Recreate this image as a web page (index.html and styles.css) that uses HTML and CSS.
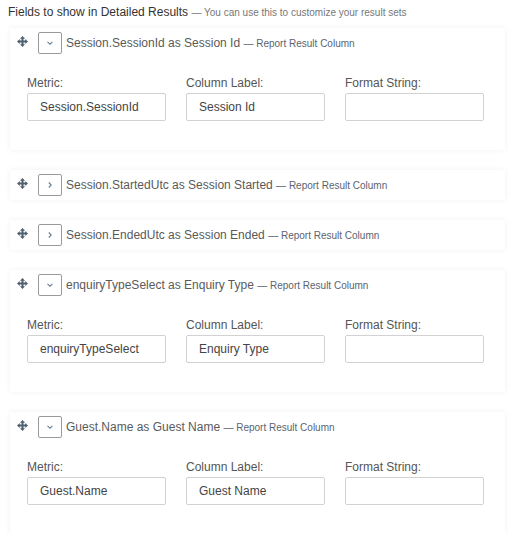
FILE: index.html
```html
<!DOCTYPE html>
<html>
<head>
<meta charset="utf-8">
<link rel="stylesheet" href="styles.css">
</head>
<body>
<div class="page">
  <div class="heading">Fields to show in Detailed Results <small>— You can use this to customize your result sets</small></div>

  <div class="card">
    <div class="card-head">
      <svg class="drag" viewBox="0 0 12 12"><path d="M6 0 L8.8 3 H7.1 V4.9 H9 V3.2 L12 6 L9 8.8 V7.1 H7.1 V9 H8.8 L6 12 L3.2 9 H4.9 V7.1 H3 V8.8 L0 6 L3 3.2 V4.9 H4.9 V3 H3.2 Z"/></svg>
      <span class="toggle"><svg viewBox="0 0 10 10"><path d="M2.5 3.8 L5 6.2 L7.5 3.8"/></svg></span>
      <span class="title">Session.SessionId as Session Id <small>— Report Result Column</small></span>
    </div>
    <div class="fields">
      <label class="field"><span>Metric:</span><span class="input">Session.SessionId</span></label>
      <label class="field"><span>Column Label:</span><span class="input">Session Id</span></label>
      <label class="field"><span>Format String:</span><span class="input"></span></label>
    </div>
  </div>

  <div class="card">
    <div class="card-head">
      <svg class="drag" viewBox="0 0 12 12"><path d="M6 0 L8.8 3 H7.1 V4.9 H9 V3.2 L12 6 L9 8.8 V7.1 H7.1 V9 H8.8 L6 12 L3.2 9 H4.9 V7.1 H3 V8.8 L0 6 L3 3.2 V4.9 H4.9 V3 H3.2 Z"/></svg>
      <span class="toggle"><svg viewBox="0 0 10 10"><path d="M3.8 2.5 L6.2 5 L3.8 7.5"/></svg></span>
      <span class="title">Session.StartedUtc as Session Started <small>— Report Result Column</small></span>
    </div>
  </div>

  <div class="card">
    <div class="card-head">
      <svg class="drag" viewBox="0 0 12 12"><path d="M6 0 L8.8 3 H7.1 V4.9 H9 V3.2 L12 6 L9 8.8 V7.1 H7.1 V9 H8.8 L6 12 L3.2 9 H4.9 V7.1 H3 V8.8 L0 6 L3 3.2 V4.9 H4.9 V3 H3.2 Z"/></svg>
      <span class="toggle"><svg viewBox="0 0 10 10"><path d="M3.8 2.5 L6.2 5 L3.8 7.5"/></svg></span>
      <span class="title">Session.EndedUtc as Session Ended <small>— Report Result Column</small></span>
    </div>
  </div>

  <div class="card">
    <div class="card-head">
      <svg class="drag" viewBox="0 0 12 12"><path d="M6 0 L8.8 3 H7.1 V4.9 H9 V3.2 L12 6 L9 8.8 V7.1 H7.1 V9 H8.8 L6 12 L3.2 9 H4.9 V7.1 H3 V8.8 L0 6 L3 3.2 V4.9 H4.9 V3 H3.2 Z"/></svg>
      <span class="toggle"><svg viewBox="0 0 10 10"><path d="M2.5 3.8 L5 6.2 L7.5 3.8"/></svg></span>
      <span class="title">enquiryTypeSelect as Enquiry Type <small>— Report Result Column</small></span>
    </div>
    <div class="fields">
      <label class="field"><span>Metric:</span><span class="input">enquiryTypeSelect</span></label>
      <label class="field"><span>Column Label:</span><span class="input">Enquiry Type</span></label>
      <label class="field"><span>Format String:</span><span class="input"></span></label>
    </div>
  </div>

  <div class="card">
    <div class="card-head">
      <svg class="drag" viewBox="0 0 12 12"><path d="M6 0 L8.8 3 H7.1 V4.9 H9 V3.2 L12 6 L9 8.8 V7.1 H7.1 V9 H8.8 L6 12 L3.2 9 H4.9 V7.1 H3 V8.8 L0 6 L3 3.2 V4.9 H4.9 V3 H3.2 Z"/></svg>
      <span class="toggle"><svg viewBox="0 0 10 10"><path d="M2.5 3.8 L5 6.2 L7.5 3.8"/></svg></span>
      <span class="title">Guest.Name as Guest Name <small>— Report Result Column</small></span>
    </div>
    <div class="fields">
      <label class="field"><span>Metric:</span><span class="input">Guest.Name</span></label>
      <label class="field"><span>Column Label:</span><span class="input">Guest Name</span></label>
      <label class="field"><span>Format String:</span><span class="input"></span></label>
    </div>
  </div>
</div>
</body>
</html>
```

FILE: styles.css
```css
html, body {
  margin: 0;
  padding: 0;
  background: #fff;
}
body {
  font-family: "Liberation Sans", Arial, sans-serif;
  color: #444;
}
.page {
  padding: 5px 7px 0 10px;
  display: flex;
  flex-direction: column;
  gap: 20px;
}
.heading {
  font-size: 12px;
  line-height: 14px;
  color: #333;
  margin-left: -2px;
  margin-bottom: -12px;
}
.heading small {
  font-size: 10px;
  color: #777;
}
.card {
  background: #fff;
  box-shadow: 0 0 6px rgba(0, 0, 0, 0.06);
  padding: 3px 10px 4px 7px;
}
.card-head {
  display: flex;
  align-items: center;
  height: 23px;
}
.drag {
  width: 11px;
  height: 11px;
  fill: #51606f;
  margin-right: 10px;
  margin-top: -3px;
}
.toggle {
  width: 22px;
  height: 20px;
  border: 1px solid #9a9a9a;
  border-radius: 2px;
  display: flex;
  align-items: center;
  justify-content: center;
  margin-right: 4px;
  background: #fff;
}
.toggle svg {
  width: 10px;
  height: 10px;
  fill: none;
  stroke: #6a7f93;
  stroke-width: 1.1;
}
.title {
  font-size: 12px;
  color: #5a5a5a;
  white-space: nowrap;
}
.title small {
  font-size: 10px;
  color: #5a6470;
}
.fields {
  display: grid;
  grid-template-columns: 139px 139px 139px;
  column-gap: 20px;
  padding: 22px 0 25px 10px;
}
.field {
  display: flex;
  flex-direction: column;
  font-size: 12px;
  color: #555;
}
.field > span:first-child {
  line-height: 14px;
  margin-bottom: 3px;
}
.input {
  display: block;
  box-sizing: border-box;
  height: 28px;
  border: 1px solid #d2d2d2;
  border-radius: 2px;
  padding: 0 12px;
  line-height: 26px;
  font-size: 12px;
  color: #444;
  background: #fff;
}
```
